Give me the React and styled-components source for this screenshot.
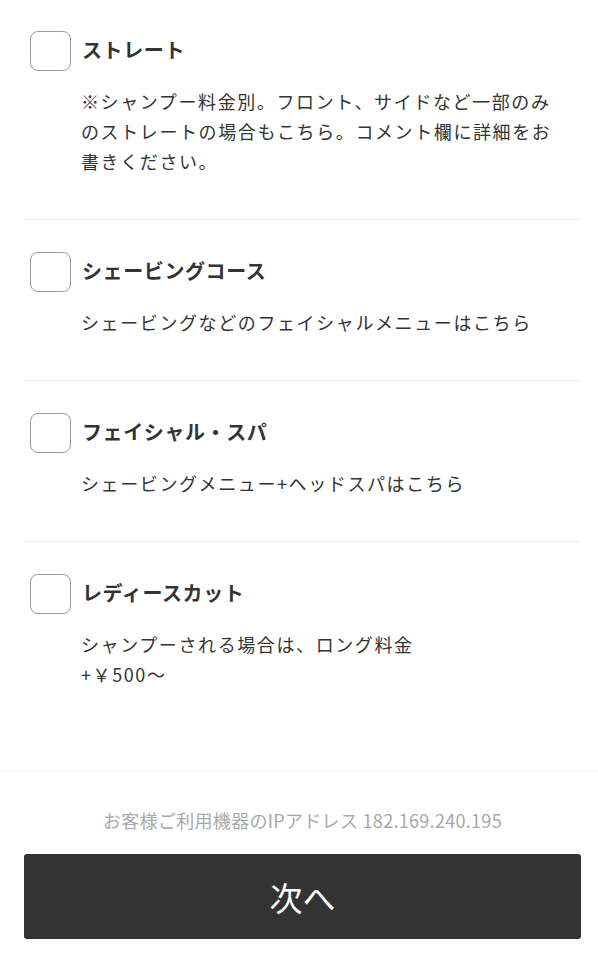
import React, { useState } from 'react'
import styled, { createGlobalStyle } from 'styled-components'

const GlobalStyle = createGlobalStyle`
  html, body {
    margin: 0;
    padding: 0;
    background: #fff;
  }
  body {
    font-family: "Noto Sans CJK JP", "Noto Sans", sans-serif;
    color: #333;
  }
`

const Page = styled.div`
  width: 598px;
  min-height: 960px;
  display: flex;
  flex-direction: column;
`

const List = styled.ul`
  list-style: none;
  margin: 0;
  padding: 0 17px 0 24px;
`

const Item = styled.li`
  padding: 32px 0 43px 6px;
  border-bottom: 1px solid ${p => (p.$last ? 'transparent' : '#eaeaea')};

  &:first-child {
    padding-top: 31px;
  }
`

const Head = styled.label`
  display: flex;
  align-items: center;
  gap: 11px;
  cursor: pointer;
`

const Box = styled.span`
  box-sizing: border-box;
  width: 41px;
  height: 40px;
  flex: none;
  border: 1.5px solid ${p => (p.$checked ? '#333' : '#9a9a9a')};
  border-radius: 8px;
  background: ${p => (p.$checked ? '#333' : '#fff')};
  display: flex;
  align-items: center;
  justify-content: center;
`

const Title = styled.span`
  font-size: 20px;
  font-weight: 700;
  letter-spacing: 0.6px;
  color: #333;
  margin-top: -3px;
`

const Desc = styled.p`
  margin: 15px 0 0 51px;
  max-width: 484px;
  font-size: 18px;
  letter-spacing: 1.6px;
  line-height: 30px;
  color: #333;
`

const Footer = styled.footer`
  margin-top: 38px;
  border-top: 1px solid #f4f4f4;
  padding: 35px 17px 21px 24px;
  display: flex;
  flex-direction: column;
  align-items: center;
  gap: 21px;
`

const Ip = styled.p`
  margin: 0;
  font-size: 18px;
  letter-spacing: 0.3px;
  color: #a8a8a8;
`

const NextButton = styled.button`
  width: 100%;
  height: 85px;
  border: none;
  border-radius: 3px;
  background: #333;
  color: #fff;
  font-family: inherit;
  font-size: 33px;
  font-weight: 400;
  cursor: pointer;
`

const menus = [
  {
    id: 'straight',
    title: 'ストレート',
    desc: '※シャンプー料金別。フロント、サイドなど一部のみのストレートの場合もこちら。コメント欄に詳細をお書きください。'
  },
  {
    id: 'shaving',
    title: 'シェービングコース',
    desc: 'シェービングなどのフェイシャルメニューはこちら'
  },
  {
    id: 'facial',
    title: 'フェイシャル・スパ',
    desc: 'シェービングメニュー+ヘッドスパはこちら'
  },
  {
    id: 'ladies',
    title: 'レディースカット',
    desc: ['シャンプーされる場合は、ロング料金', '+￥500〜']
  }
]

const App = () => {
  let [checked, setChecked] = useState({})

  const toggle = (id) => {
    setChecked({ ...checked, [id]: !checked[id] })
  }

  return (
    <Page>
      <GlobalStyle />
      <List>
        {menus.map((menu, index) => (
          <Item key={menu.id} $last={index === menus.length - 1}>
            <Head onClick={() => toggle(menu.id)}>
              <Box $checked={checked[menu.id]}>
                {checked[menu.id] && (
                  <svg width="22" height="22" viewBox="0 0 24 24" fill="none" stroke="#fff" strokeWidth="3">
                    <path d="M5 12l5 5 9-10" />
                  </svg>
                )}
              </Box>
              <Title>{menu.title}</Title>
            </Head>
            <Desc>
              {Array.isArray(menu.desc)
                ? menu.desc.map((line, i) => (
                    <React.Fragment key={i}>
                      {i > 0 && <br />}
                      {line}
                    </React.Fragment>
                  ))
                : menu.desc}
            </Desc>
          </Item>
        ))}
      </List>
      <Footer>
        <Ip>お客様ご利用機器のIPアドレス 182.169.240.195</Ip>
        <NextButton>次へ</NextButton>
      </Footer>
    </Page>
  )
}

export default App
